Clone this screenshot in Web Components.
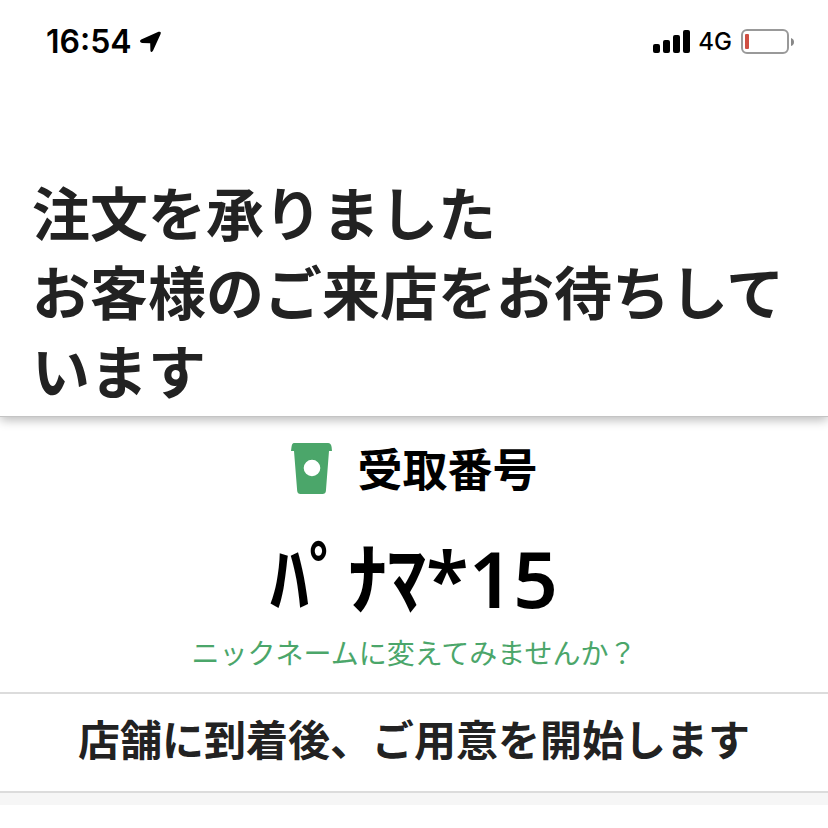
<!DOCTYPE html>
<html lang="ja">
<head>
<meta charset="utf-8">
<meta name="viewport" content="width=device-width, initial-scale=1">
<title>注文を承りました</title>
<style>
body { margin: 0; background: #fff; color: #000; font-family: Inter, "Noto Sans CJK JP", sans-serif; }
</style>
</head>
<body>
<order-screen></order-screen>
<script>
const define = (name, html) => customElements.define(name, class extends HTMLElement {
  constructor() {
    super();
    const t = document.createElement('template');
    t.innerHTML = html;
    this.attachShadow({ mode: 'open' }).appendChild(t.content.cloneNode(true));
  }
});

define('status-bar', `
<style>
:host { display: flex; justify-content: space-between; align-items: center; height: 84px; padding: 0 34px 0 46px; }
.side { display: flex; align-items: center; gap: 8px; }
.time { font-size: 32px; line-height: 40px; font-weight: 600; }
.net { font-size: 24px; line-height: 32px; font-weight: 500; }
svg { display: block; }
</style>
<div class="side">
  <span class="time"><slot name="time"></slot></span>
  <svg width="22" height="22" viewBox="0 0 22 22" aria-hidden="true"><path d="M1.2 8.500 18.500 .800Q21.500 0 20.600 3L13.100 19.500Q11 22.500 10.400 19.500L10.200 12.200 2 11.900Q-1.500 10.500 1.200 8.500Z"/></svg>
</div>
<div class="side">
  <svg width="38" height="24" viewBox="0 0 38 24" aria-hidden="true"><rect x="1" y="14" width="7" height="9" rx="2"/><rect x="11" y="10" width="7" height="13" rx="2"/><rect x="21" y="5" width="7" height="18" rx="2"/><rect x="31" width="7" height="23" rx="2"/></svg>
  <span class="net"><slot name="network"></slot></span>
  <svg width="54" height="26" viewBox="0 0 54 26" aria-hidden="true"><rect x="2" y="1" width="46" height="23" rx="5" fill="none" stroke="#999" stroke-width="2"/><rect x="5" y="5" width="4" height="15" rx="1" fill="#cf4f43"/><path d="M51 9Q54 10 54 13T51 17Z" fill="#888"/></svg>
</div>`);

define('order-heading', `
<style>
:host { display: block; padding: 88px 32px 7px; border-bottom: 1px solid #c4c4c4; box-shadow: 0 3px 10px rgba(0,0,0,.28); clip-path: inset(0 0 -20px 0); }
h1 { margin: 0; font: 700 58px/79px "Noto Sans CJK JP", sans-serif; color: #222; }
</style>
<h1><slot></slot></h1>`);

define('pickup-number', `
<style>
:host { display: flex; flex-direction: column; align-items: center; padding-top: 19px; border-bottom: 2px solid #dcdcdc; }
.label { display: flex; align-items: center; gap: 24px; }
h2 { margin: 0; font: 700 45px/64px "Noto Sans CJK JP", sans-serif; }
.number { margin: 26px 0 2px; font: 600 78px/104px "Noto Sans", "Noto Sans CJK JP", sans-serif; }
a { display: block; padding-bottom: 20px; font: 400 28px/40px "Noto Sans CJK JP", sans-serif; color: #4ba66a; text-decoration: none; }
</style>
<div class="label">
  <svg width="43" height="53" viewBox="0 0 43 53" aria-hidden="true"><path fill="#4ba66a" fill-rule="evenodd" d="M4 1H38Q41 1 41.6 5L42 9H39L35.900 49Q35.600 52 32.500 52H10.500Q7.500 52 7.200 49L4 9H1L1.500 5Q2 1 4 1ZM22 17.700A8.300 8.300 0 1 0 22 34.300A8.300 8.300 0 1 0 22 17.700Z"/></svg>
  <h2><slot name="label"></slot></h2>
</div>
<p class="number"><slot name="number"></slot></p>
<a href="#nickname"><slot name="link"></slot></a>`);

define('order-notice', `
<style>
:host { display: block; padding: 10px 24px 19px; border-bottom: 2px solid #dcdcdc; text-align: center; }
p { margin: 0; font: 700 42px/68px "Noto Sans CJK JP", sans-serif; color: #222; }
</style>
<p><slot></slot></p>`);

define('section-gap', `<style>:host { display: block; height: 12px; background: #f6f6f6; }</style>`);

define('order-screen', `
<style>:host { display: block; }</style>
<status-bar><span slot="time">16:54</span><span slot="network">4G</span></status-bar>
<main>
<order-heading>注文を承りました<br>お客様のご来店をお待ちしています</order-heading>
<pickup-number><span slot="label">受取番号</span><span slot="number">ﾊﾟﾅﾏ*15</span><span slot="link">ニックネームに変えてみませんか？</span></pickup-number>
<order-notice>店舗に到着後、ご用意を開始します</order-notice>
<section-gap></section-gap>
</main>`);
</script>
</body>
</html>
